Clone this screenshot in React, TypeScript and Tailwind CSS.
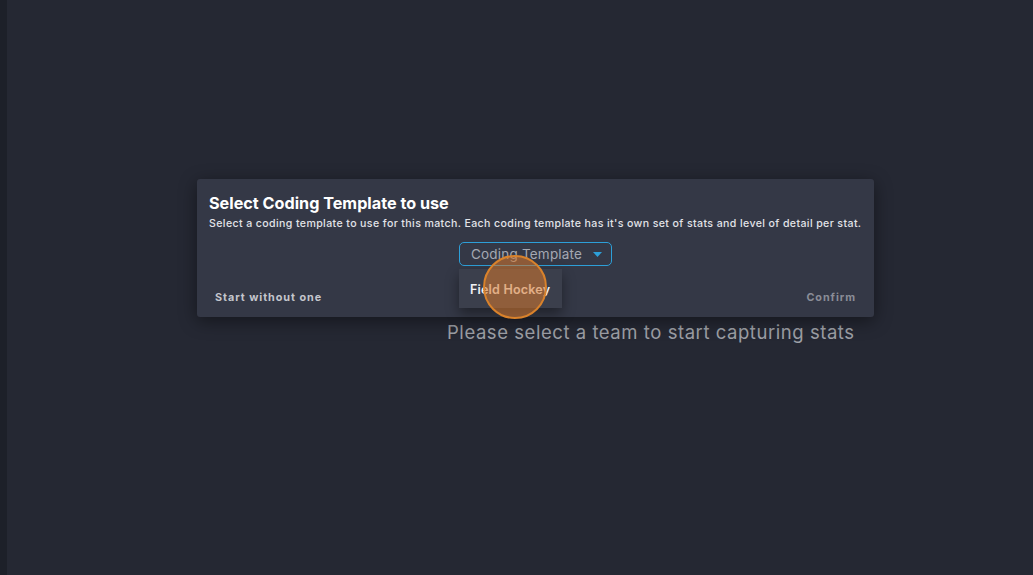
export default function App() {
  return (
    <div
      className="flex h-[575px] w-[1033px] overflow-hidden bg-[#252833]"
      style={{ fontFamily: "Inter, 'Noto Sans', sans-serif" }}
    >
      {/* left rail */}
      <div className="w-[7px] shrink-0 bg-[#1d2029]" />

      <div className="flex flex-1 flex-col pl-[190px] pt-[179px]">
        {/* dialog */}
        <div className="relative w-[677px] rounded-[3px] bg-[#343846] px-3 pt-[14px] pb-[11px] shadow-[0_4px_18px_rgba(0,0,0,0.45)]">
          <h2 className="text-[16.2px] font-bold leading-[20px] tracking-[0px] text-white">
            Select Coding Template to use
          </h2>
          <p className="mt-[4px] text-[10.6px] font-medium leading-[14px] tracking-[0.38px] text-[#e2e3e8]">
            Select a coding template to use for this match. Each coding template has it's own set of stats and level of detail per stat.
          </p>

          <div className="mt-[11px] flex justify-center">
            <div className="relative">
              <button className="flex h-[24px] w-[153px] items-center rounded-[5px] border border-[#2d9fd8] pl-[11px] pr-[9px] text-[13.5px] tracking-[0.2px] text-[#a5a8b2]">
                <span>Coding Template</span>
                <svg className="ml-auto" width="9" height="5" viewBox="0 0 9 5">
                  <path d="M0 0h9L4.5 5z" fill="#2d9fd8" />
                </svg>
              </button>

              {/* menu */}
              <div className="absolute left-0 top-[27px] z-10 flex h-[39px] w-[103px] items-center bg-[#3b3f4c] pl-[11px] pt-[3px] shadow-[0_6px_12px_rgba(0,0,0,0.4)]">
                <span className="text-[12.5px] font-semibold tracking-[0.2px] text-[#f1f1f4]">Field Hockey</span>
              </div>

              {/* click marker */}
              <div className="absolute left-[24px] top-[13px] z-20 h-[64px] w-[64px] rounded-full border-2 border-[#d9822b] bg-[rgba(215,120,45,0.55)]" />
            </div>
          </div>

          <div className="mt-[24px] flex items-center justify-between px-[6px]">
            <span className="text-[10.8px] font-bold tracking-[0.95px] text-[#c4c6cd]">Start without one</span>
            <span className="text-[10.8px] font-bold tracking-[0.95px] text-[#8a8d97]">Confirm</span>
          </div>
        </div>

        <p className="mt-[3px] ml-[250px] text-[18.5px] leading-[24px] tracking-[0.55px] text-[#9ea0a7]">
          Please select a team to start capturing stats
        </p>
      </div>
    </div>
  );
}
